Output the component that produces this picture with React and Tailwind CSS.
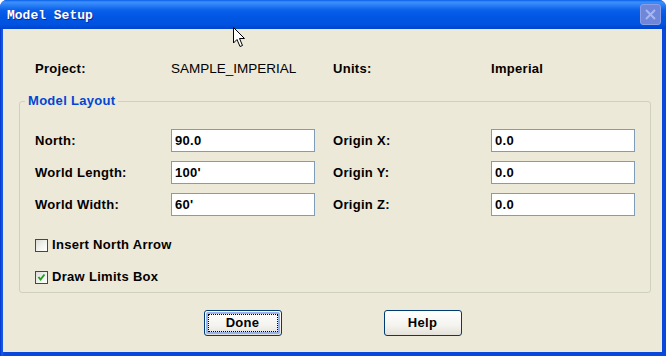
import React from 'react';

const labelCls = "text-[13px] font-bold text-black leading-[16px] tracking-[0.3px]";

const XpInput = ({ value }) => (
  <div className="w-[144px] h-[23px] border border-[#7f9db9] bg-white flex items-center pl-[3px]">
    <span className={labelCls}>{value}</span>
  </div>
);

const XpCheck = ({ checked, label }) => (
  <div className="flex items-center h-[16px] gap-[4px]">
    <div className="w-[13px] h-[13px] border border-[#1c5180] bg-[linear-gradient(135deg,#dcdcd7_0%,#f4f4f0_60%,#ffffff_100%)] flex items-center justify-center">
      {checked && (
        <svg width="9" height="9" viewBox="0 0 9 9">
          <path d="M1.5 4 L3.5 6.5 L7.5 1.5" fill="none" stroke="#21a121" strokeWidth="2" />
        </svg>
      )}
    </div>
    <span className={labelCls}>{label}</span>
  </div>
);

const XpButton = ({ children, isDefault }) => (
  <div className="w-[78px] h-[26px] rounded-[3px] border border-[#003c74] bg-[linear-gradient(to_bottom,#ffffff_0%,#f4f3ee_60%,#e3e1d8_100%)] p-[1px]">
    <div
      className={
        "w-full h-full rounded-[2px] flex items-center justify-center " +
        (isDefault ? "border-2 border-[#98b4ea]" : "")
      }
    >
      <div
        className={
          "w-full h-full flex items-center justify-center " +
          (isDefault ? "border border-dotted border-black" : "")
        }
      >
        <span className={labelCls}>{children}</span>
      </div>
    </div>
  </div>
);

const rows = [
  ["North:", "90.0", "Origin X:", "0.0"],
  ["World Length:", "100'", "Origin Y:", "0.0"],
  ["World Width:", "60'", "Origin Z:", "0.0"],
];

export default function App() {
  return (
    <div className="relative w-[666px] h-[356px] flex flex-col overflow-hidden rounded-t-[7px] bg-[#0842d6] font-['Liberation_Sans',Arial,sans-serif]">
      {/* title bar */}
      <div className="h-[29px] shrink-0 flex items-center justify-between pl-[7px] pr-[5px] bg-[linear-gradient(to_bottom,#0a5ee8_0%,#3d91fb_7%,#2a7ef5_18%,#0a60ea_35%,#0056e4_60%,#0052e0_85%,#0044cc_100%)]">
        <span className="font-['Liberation_Mono',monospace] font-bold text-[13px] text-white pt-[2px] [text-shadow:1px_1px_#0a2a9a]">
          Model Setup
        </span>
        <div className="w-[21px] h-[21px] rounded-[3px] border border-[#8a9fe6] bg-[#6f87da] flex items-center justify-center">
          <svg width="13" height="13" viewBox="0 0 13 13">
            <path d="M2 2 L11 11 M11 2 L2 11" stroke="#aab7ea" strokeWidth="2" />
          </svg>
        </div>
      </div>

      {/* frame + body */}
      <div className="flex-1 flex pl-[3px] pr-[4px] pb-[4px] bg-[linear-gradient(to_right,#0033cc_0px,#1a5ce6_2px,#0a48dc_4px)]">
        <div className="flex-1 bg-[#ece9d8] flex flex-col pt-[32px]">
          <div className="grid grid-cols-[136px_162px_158px_1fr] pl-[32px] h-[16px] items-center">
            <span className={labelCls}>Project:</span>
            <span className="text-[13.5px] text-black leading-[16px]">SAMPLE_IMPERIAL</span>
            <span className={labelCls}>Units:</span>
            <span className={labelCls}>Imperial</span>
          </div>

          <fieldset className="mt-[16px] ml-[16px] w-[632px] h-[200px] border border-[#d0d0bf] rounded-[3px] flex flex-col">
            <legend className="ml-[5px] px-[3px] text-[13px] font-bold text-[#0046d5] leading-[16px] tracking-[0.3px]">
              Model Layout
            </legend>
            <div className="flex flex-col gap-[9px] pt-[20px] pl-[15px]">
              {rows.map((r) => (
                <div key={r[0]} className="grid grid-cols-[136px_162px_158px_144px] items-center h-[23px]">
                  <span className={labelCls}>{r[0]}</span>
                  <XpInput value={r[1]} />
                  <span className={labelCls}>{r[2]}</span>
                  <XpInput value={r[3]} />
                </div>
              ))}
            </div>
            <div className="flex flex-col gap-[16px] pt-[21px] pl-[15px]">
              <XpCheck label="Insert North Arrow" />
              <XpCheck checked label="Draw Limits Box" />
            </div>
          </fieldset>

          <div className="flex justify-center gap-[102px] mt-[17px]">
            <XpButton isDefault>Done</XpButton>
            <XpButton>Help</XpButton>
          </div>
        </div>
      </div>

      {/* mouse pointer */}
      <svg className="absolute left-[233px] top-[27px]" width="14" height="21" viewBox="0 0 14 21">
        <path d="M0.5 0.5 L0.5 16 L4 12.5 L7 19.5 L9.5 18.5 L6.5 11.5 L11.5 11.5 Z" fill="white" stroke="black" strokeWidth="1" />
      </svg>
    </div>
  );
}
